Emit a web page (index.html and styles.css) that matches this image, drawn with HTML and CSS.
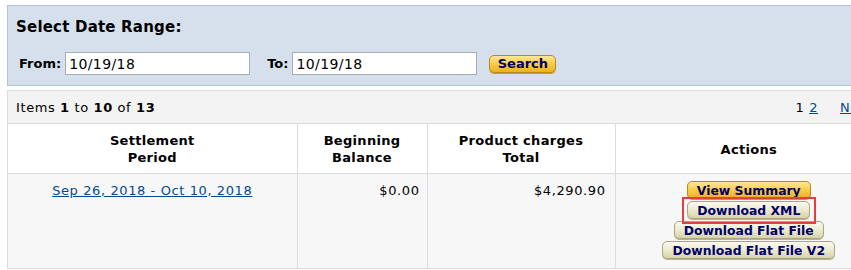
FILE: index.html
```html
<!DOCTYPE html>
<html>
<head>
<meta charset="utf-8">
<link rel="stylesheet" href="styles.css">
</head>
<body>
<div class="page">
  <div class="range-panel">
    <h2 class="range-title">Select Date Range:</h2>
    <form class="range-form">
      <label class="field-label">From:</label>
      <input class="date-input" type="text" value="10/19/18">
      <label class="field-label to-label">To:</label>
      <input class="date-input" type="text" value="10/19/18">
      <button type="button" class="btn btn-yellow search-btn">Search</button>
    </form>
  </div>

  <div class="results">
    <div class="items-bar">
      <span class="items-count">Items <b>1</b> to <b>10</b> of <b>13</b></span>
      <span class="pager">1 <a href="#">2</a><span class="pager-gap"></span><a href="#">Next »</a></span>
    </div>
    <table class="grid">
      <thead>
        <tr>
          <th class="col-period">Settlement<br>Period</th>
          <th class="col-begin">Beginning<br>Balance</th>
          <th class="col-charges">Product charges<br>Total</th>
          <th class="col-actions">Actions</th>
        </tr>
      </thead>
      <tbody>
        <tr>
          <td class="cell-period"><a href="#">Sep 26, 2018 - Oct 10, 2018</a></td>
          <td class="cell-num cell-begin">$0.00</td>
          <td class="cell-num cell-charges">$4,290.90</td>
          <td class="cell-actions">
            <div class="actions">
              <button type="button" class="btn btn-yellow">View Summary</button>
              <button type="button" class="btn btn-beige highlighted">Download XML</button>
              <button type="button" class="btn btn-beige">Download Flat File</button>
              <button type="button" class="btn btn-beige">Download Flat File V2</button>
            </div>
          </td>
        </tr>
      </tbody>
    </table>
  </div>
</div>
</body>
</html>
```

FILE: styles.css
```css
html, body {
  margin: 0;
  padding: 0;
  background: #fff;
  overflow: hidden;
}
body {
  font-family: "DejaVu Sans", Verdana, sans-serif;
  font-size: 13px;
  color: #000;
}
.page {
  padding: 5px 0 0 7px;
  width: 876px;
}
.range-panel {
  background: #d6e0ec;
  border: 1px solid #b3c1d8;
  height: 79px;
  box-sizing: content-box;
}
.range-title {
  margin: 0;
  padding: 10px 0 0 8px;
  font-size: 15px;
  font-weight: bold;
  line-height: 22px;
  letter-spacing: 0.2px;
}
.range-form {
  display: flex;
  align-items: center;
  margin: 14px 0 0 11px;
}
.field-label {
  font-weight: bold;
  font-size: 13px;
  margin-right: 4px;
}
.to-label {
  margin-left: 17px;
  margin-right: 4px;
}
.date-input {
  width: 185px;
  height: 23px;
  box-sizing: border-box;
  border: 1px solid #a5acb2;
  padding: 1px 3px 0;
  font-family: "DejaVu Sans", Verdana, sans-serif;
  font-size: 14px;
  letter-spacing: 0.4px;
  color: #000;
  background: #fff;
  margin: 0;
}
.btn {
  font-family: "DejaVu Sans", Verdana, sans-serif;
  font-weight: bold;
  font-size: 12.4px;
  color: #000066;
  border-radius: 5px;
  height: 18px;
  line-height: 15px;
  padding: 0 9px;
  margin: 0;
  cursor: pointer;
  box-sizing: border-box;
  white-space: nowrap;
}
.btn-yellow {
  background: linear-gradient(#fde89a 0%, #f9cf4e 45%, #efb01f 100%);
  border: 1px solid #b58b1c;
  box-shadow: 0 1px 0 #c99a2a;
}
.btn-beige {
  background: linear-gradient(#fbfaf0 0%, #ecead0 50%, #d7d3a8 100%);
  border: 1px solid #a9a481;
  box-shadow: 0 1px 0 #b8b393;
}
.search-btn {
  margin-left: 12px;
  width: 67px;
  padding: 0;
  font-size: 13px;
}
.results {
  margin-top: 4px;
  border-left: 1px solid #dcdcdc;
}
.items-bar {
  display: flex;
  justify-content: space-between;
  align-items: center;
  height: 31px;
  background: #f3f3f3;
  border-top: 1px solid #dcdcdc;
  padding: 1px 0 0 8px;
  box-sizing: content-box;
  letter-spacing: 0.6px;
}
.pager {
  margin-right: -3px;
}
.pager a {
  color: #004b91;
  text-decoration: underline;
}
.pager-gap {
  display: inline-block;
  width: 22px;
}
.grid {
  width: 100%;
  border-collapse: collapse;
}
.grid th {
  background: #fff;
  font-weight: bold;
  font-size: 13px;
  line-height: 17px;
  height: 50px;
  padding: 1px 0 0;
  text-align: center;
  border-top: 1px solid #dcdcdc;
  border-right: 1px solid #dcdcdc;
  border-bottom: 1px solid #dcdcdc;
  box-sizing: border-box;
  letter-spacing: 0.3px;
}
.col-period { width: 289px; }
.col-begin { width: 130px; }
.col-charges { width: 188px; }
.grid td {
  background: #f7f7f7;
  border-right: 1px solid #dcdcdc;
  border-bottom: 1px solid #dcdcdc;
  vertical-align: top;
  padding: 9px 0 0;
  height: 95px;
  box-sizing: border-box;
  letter-spacing: 0.6px;
}
.cell-period {
  text-align: center;
}
.cell-period a {
  color: #004b91;
  text-decoration: underline;
}
.cell-num {
  text-align: right;
}
.grid td.cell-begin { padding-right: 7px; }
.grid td.cell-charges { padding-right: 9px; }
.grid td.cell-actions {
  padding: 7px 0 0;
  letter-spacing: 0;
}
.actions {
  display: flex;
  flex-direction: column;
  align-items: center;
  gap: 2px;
}
.highlighted {
  position: relative;
}
.highlighted::after {
  content: "";
  position: absolute;
  left: -6px;
  right: -7px;
  top: -5px;
  bottom: -6px;
  border: 2px solid #e2403c;
  pointer-events: none;
}
```
